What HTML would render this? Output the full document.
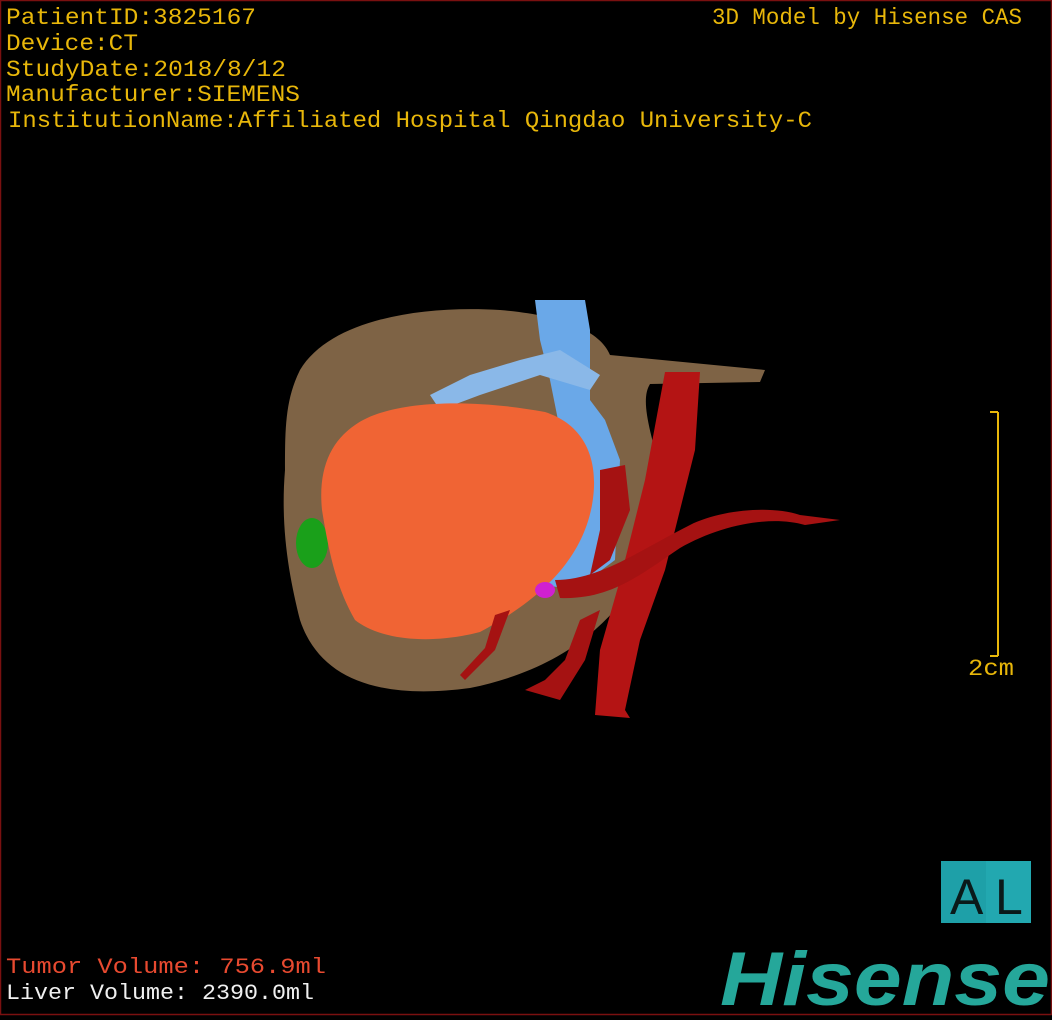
<!DOCTYPE html>
<html><head><style>
body{margin:0;background:#000;width:1052px;height:1020px;overflow:hidden}
svg{display:block}
</style></head><body>
<svg width="1052" height="1020" viewBox="0 0 1052 1020" xmlns="http://www.w3.org/2000/svg">
<rect x="0.5" y="0.5" width="1051" height="1014" fill="#000" stroke="#7a1010" stroke-width="1.5"/>
<g font-family="Liberation Mono, monospace" font-size="23" fill="#e8b70a">
<text x="6" y="24" textLength="250" lengthAdjust="spacingAndGlyphs">PatientID:3825167</text>
<text x="6" y="50" textLength="132" lengthAdjust="spacingAndGlyphs">Device:CT</text>
<text x="6" y="76" textLength="280" lengthAdjust="spacingAndGlyphs">StudyDate:2018/8/12</text>
<text x="6" y="101" textLength="294" lengthAdjust="spacingAndGlyphs">Manufacturer:SIEMENS</text>
<text x="8" y="127" textLength="804" lengthAdjust="spacingAndGlyphs">InstitutionName:Affiliated Hospital Qingdao University-C</text>
<text x="712" y="24" textLength="310" lengthAdjust="spacingAndGlyphs">3D Model by Hisense CAS</text>
<text x="968" y="675" textLength="46" lengthAdjust="spacingAndGlyphs">2cm</text>
</g>
<g font-family="Liberation Mono, monospace" font-size="22">
<text x="6" y="973" fill="#e84a30" textLength="320" lengthAdjust="spacingAndGlyphs">Tumor Volume:  756.9ml</text>
<text x="6" y="999" fill="#f0f0f0" textLength="308" lengthAdjust="spacingAndGlyphs">Liver Volume: 2390.0ml</text>
</g>
<g stroke="#e8b70a" stroke-width="2">
<line x1="998" y1="412" x2="998" y2="656"/>
<line x1="990" y1="412" x2="998" y2="412"/>
<line x1="990" y1="656" x2="998" y2="656"/>
</g>
<path d="M300 370 C330 320 420 305 500 310 C560 315 600 330 610 355 L765 370 L760 382 L650 384 C640 400 650 430 660 470 C670 560 610 660 470 688 C380 700 320 680 300 620 C290 580 280 530 285 470 C285 430 285 400 300 370Z" fill="#8c6e4c" fill-opacity="0.9"/>
<ellipse cx="312" cy="543" rx="16" ry="25" fill="#1aa01a"/>
<path d="M535 300 L585 300 L590 330 L590 400 L605 420 L620 460 L615 560 L575 590 L545 585 L550 500 L560 430 L550 380 L540 340Z" fill="#6aa8e8"/>
<path d="M430 395 L470 375 L520 360 L560 350 L600 375 L590 390 L540 375 L480 395 L440 410Z" fill="#8ab8e8"/>
<path d="M355 425 C390 400 470 398 545 412 C585 425 600 460 592 505 C582 560 540 600 480 632 C430 645 380 640 355 620 C338 590 330 560 322 510 C318 470 330 442 355 425Z" fill="#f06434"/>
<ellipse cx="545" cy="590" rx="10" ry="8" fill="#d020d0"/>
<path d="M665 372 L700 372 L695 450 L665 570 L640 640 L625 710 L630 718 L595 715 L600 650 L620 580 L645 480Z" fill="#b41414"/>
<path d="M555 580 C600 580 640 550 690 525 C720 510 770 505 800 515 L840 520 L805 525 C770 515 720 525 680 548 C640 575 610 600 560 598Z" fill="#a51212"/>
<path d="M600 470 L625 465 L630 510 L610 560 L590 575 L600 530Z" fill="#a51212"/>
<path d="M580 620 L600 610 L585 660 L560 700 L525 690 L545 680 L565 660Z" fill="#a51212"/>
<path d="M495 615 L510 610 L495 650 L465 680 L460 675 L485 648Z" fill="#a51212"/>
<rect x="941" y="861" width="90" height="62" fill="#1ea0a8"/>
<rect x="986" y="861" width="45" height="62" fill="#22a8b0"/>
<text x="950" y="914" font-family="Liberation Sans Narrow, Liberation Sans, sans-serif" font-size="50" fill="#0a1a1a">A</text>
<text x="995" y="914" font-family="Liberation Sans Narrow, Liberation Sans, sans-serif" font-size="50" fill="#0a1a1a">L</text>
<text x="720" y="1005" font-family="Liberation Sans, sans-serif" font-weight="bold" font-style="italic" font-size="76" fill="#25a79a" textLength="330" lengthAdjust="spacingAndGlyphs">Hisense</text>
</svg>
</body></html>
